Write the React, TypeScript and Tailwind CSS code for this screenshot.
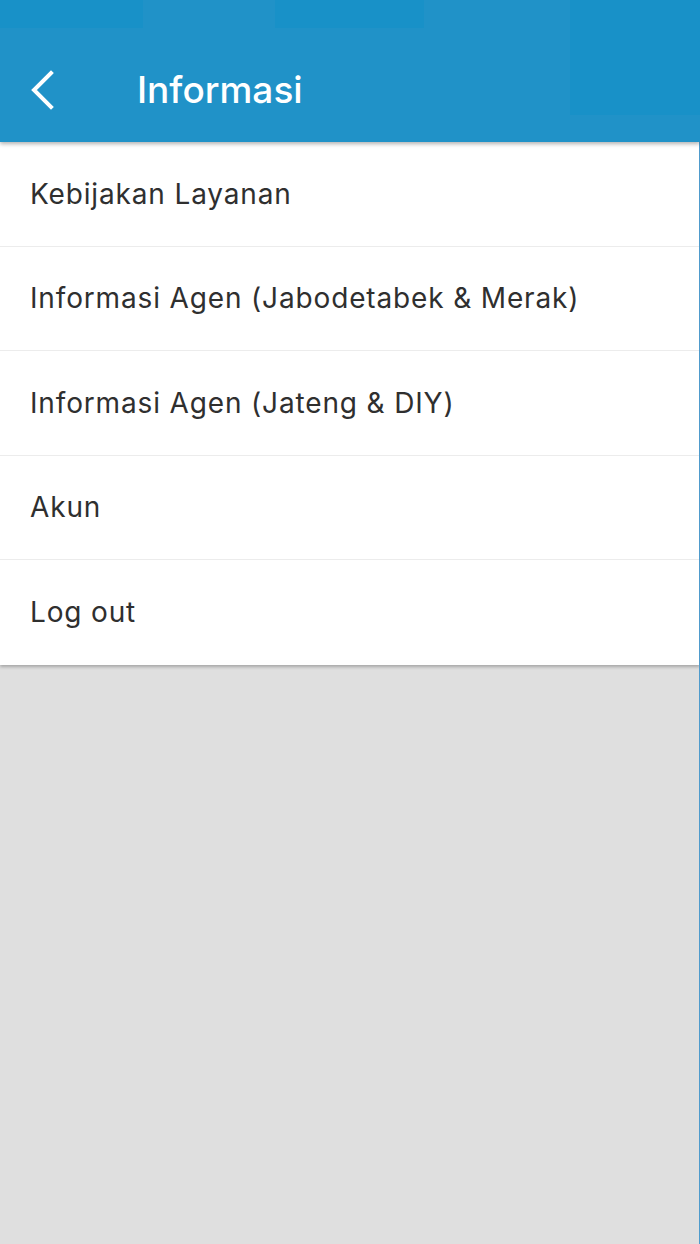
import React from "react";

const items = [
  "Kebijakan Layanan",
  "Informasi Agen (Jabodetabek & Merak)",
  "Informasi Agen (Jateng & DIY)",
  "Akun",
  "Log out",
];

export default function App() {
  return (
    <div
      className="relative w-[700px] h-[1244px] bg-[#dfdfdf] overflow-hidden"
      style={{ fontFamily: "Inter, sans-serif" }}
    >
      <div className="relative z-10 h-[142px] bg-[#2092c8] shadow-[0_2px_4px_rgba(0,0,0,0.3)]">
        <div className="flex h-[28px]">
          <div className="w-[143px] bg-[#1891c8]" />
          <div className="w-[132px]" />
          <div className="w-[149px] bg-[#1891c8]" />
          <div className="w-[146px]" />
          <div className="flex-1 h-[115px] bg-[#1891c8]" />
        </div>
        <div className="absolute left-0 top-[56px] h-[68px] flex items-center w-full">
          <svg width="28" height="40" viewBox="0 0 28 40" className="ml-[28px]">
            <path d="M23 3 L6 20 L23 37" fill="none" stroke="white" strokeWidth="4" strokeLinecap="square" />
          </svg>
          <span className="ml-[81px] text-white text-[37px] font-medium">Informasi</span>
        </div>
      </div>
      <div className="bg-white shadow-[0_2px_3px_rgba(0,0,0,0.25)]">
        {items.map((t, i) => (
          <div
            key={t}
            className={`h-[104.5px] flex items-center pl-[30px] ${i < items.length - 1 ? "border-b border-[#ececec]" : ""}`}
          >
            <span className="text-[28px] tracking-[0.85px] text-[#2f2f2f]">{t}</span>
          </div>
        ))}
      </div>
      <div className="absolute right-0 top-[142px] bottom-0 w-[1px] bg-[#4f9bcc]" />
    </div>
  );
}
